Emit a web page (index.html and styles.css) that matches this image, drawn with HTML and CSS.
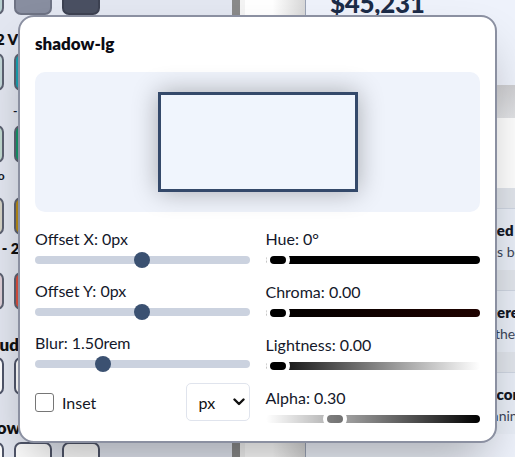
FILE: index.html
```html
<!DOCTYPE html>
<html lang="en">
<head>
<meta charset="utf-8">
<title>Shadow editor</title>
<link rel="stylesheet" href="styles.css">
</head>
<body>
<div class="page">
  <aside class="tools">
    <div class="tools-inner">
      <div class="btn-row first">
        <span class="swatch sw-tealish"></span>
        <span class="swatch sw-gray"></span>
        <span class="swatch sw-slate"></span>
      </div>
      <h3 class="tool-label">Tier 2 Vivid</h3>
      <div class="btn-row">
        <span class="swatch sw-pale-teal"></span>
        <span class="swatch sw-teal"></span>
        <span class="swatch sw-pale-teal"></span>
      </div>
      <p class="tool-note note-a">- 1</p>
      <div class="btn-row">
        <span class="swatch sw-pale-green"></span>
        <span class="swatch sw-green"></span>
        <span class="swatch sw-pale-green"></span>
      </div>
      <p class="tool-note note-b">Iso</p>
      <div class="btn-row">
        <span class="swatch sw-beige"></span>
        <span class="swatch sw-gold"></span>
        <span class="swatch sw-beige"></span>
      </div>
      <h3 class="tool-label small">Warm - 2</h3>
      <div class="btn-row">
        <span class="swatch sw-pink"></span>
        <span class="swatch sw-red"></span>
        <span class="swatch sw-pink"></span>
      </div>
      <h3 class="tool-label big studio">Studio</h3>
      <div class="btn-row">
        <span class="swatch sw-white"></span>
        <span class="swatch sw-white"></span>
        <span class="swatch sw-white"></span>
      </div>
      <h3 class="tool-label big glow">Glow</h3>
      <div class="btn-row">
        <span class="swatch sw-white"></span>
        <span class="swatch sw-white"></span>
        <span class="swatch sw-white"></span>
      </div>
    </div>
  </aside>
  <div class="divider"></div>
  <div class="gutter"></div>
  <main class="dash">
    <div class="stat"><span class="stat-value">$45,231</span></div>
    <div class="band"></div>
    <div class="blank"></div>
    <div class="band thin"></div>
    <div class="card">
      <div class="card-title t1">Payment settled</div>
      <div class="card-text s1">Your invoice has been paid</div>
    </div>
    <div class="band thin"></div>
    <div class="card">
      <div class="card-title t2">New user registered</div>
      <div class="card-text s2">Welcome to the platform</div>
    </div>
    <div class="band thin"></div>
    <div class="card">
      <div class="card-title t3">Server reconnected</div>
      <div class="card-text s3">Backup running again</div>
    </div>
  </main>
</div>

<section class="modal">
  <h2 class="modal-title">shadow-lg</h2>
  <div class="preview">
    <div class="sample"></div>
  </div>
  <div class="controls">
    <div class="col">
      <div class="field">
        <label class="field-label">Offset X: 0px</label>
        <input class="range" type="range" min="-50" max="50" value="0">
      </div>
      <div class="field">
        <label class="field-label">Offset Y: 0px</label>
        <input class="range" type="range" min="-50" max="50" value="0">
      </div>
      <div class="field">
        <label class="field-label">Blur: 1.50rem</label>
        <input class="range" type="range" min="0" max="5" step="0.05" value="1.5">
      </div>
      <div class="bottom-row">
        <label class="check">
          <input class="checkbox" type="checkbox">
          <span>Inset</span>
        </label>
        <div class="select-wrap">
          <select class="unit">
            <option>px</option>
            <option>rem</option>
          </select>
          <svg class="chev" width="12" height="8" viewBox="0 0 12 8"><path d="M1.5 1.5 L6 6 L10.5 1.5" fill="none" stroke="#111" stroke-width="2.4" stroke-linecap="round" stroke-linejoin="round"/></svg>
        </div>
      </div>
    </div>
    <div class="col">
      <div class="field">
        <label class="field-label">Hue: 0°</label>
        <input class="color-range hue" type="range" min="0" max="360" value="0">
      </div>
      <div class="field">
        <label class="field-label">Chroma: 0.00</label>
        <input class="color-range chroma" type="range" min="0" max="0.4" step="0.01" value="0">
      </div>
      <div class="field">
        <label class="field-label">Lightness: 0.00</label>
        <input class="color-range light" type="range" min="0" max="1" step="0.01" value="0">
      </div>
      <div class="field">
        <label class="field-label">Alpha: 0.30</label>
        <input class="color-range alpha" type="range" min="0" max="1" step="0.01" value="0.3">
      </div>
    </div>
  </div>
</section>
</body>
</html>
```
FILE: styles.css
```css
* { box-sizing: border-box; }

html, body {
  margin: 0;
  padding: 0;
}

body {
  width: 515px;
  height: 457px;
  overflow: hidden;
  position: relative;
  font-family: Lato, "Noto Sans", sans-serif;
  color: #141826;
  background: #e6eaf3;
}

/* ---------- background page ---------- */
.page {
  display: grid;
  grid-template-columns: 232px 13px 61px 1fr;
  height: 457px;
}

.tools {
  background: #e3e7f1;
  overflow: hidden;
}

.tools-inner {
  margin-left: -47px;
  margin-top: -23px;
  padding-left: 13px;
  display: flex;
  flex-direction: column;
}

.btn-row {
  display: flex;
  gap: 10px;
  height: 38px;
}

.swatch {
  width: 38px;
  height: 38px;
  border-radius: 7px;
  border: 2px solid #5d6272;
  flex: none;
}

.sw-tealish { background: #b7cfd0; }
.sw-gray { background: #888ea0; border-color: #6e7384; }
.sw-slate { background: #4a5062; border-color: #3d4252; }
.sw-pale-teal { background: #c3d7d8; }
.sw-teal { background: #17a2b2; }
.sw-pale-green { background: #c0d9cf; }
.sw-green { background: #14966a; }
.sw-beige { background: #d6d4c6; }
.sw-gold { background: #b98d17; }
.sw-pink { background: #ddcfd7; }
.sw-red { background: #df4f3f; }
.sw-white { background: #ffffff; border-color: #50566a; }

.tool-label {
  margin: 0;
  height: 38px;
  padding-top: 15px;
  font-size: 15px;
  font-weight: 800;
  color: #111;
  white-space: nowrap;
}

.tool-label.small {
  height: 37px;
  padding-top: 4px;
  padding-left: 0;
  margin-left: -9px;
}

.tool-label.big {
  height: 47px;
  font-size: 17px;
}

.tool-label.studio {
  padding-top: 24px;
  padding-left: 18px;
}

.tool-label.glow {
  padding-top: 22px;
  padding-left: 14px;
}

.tool-note {
  margin: 0;
  height: 34px;
  padding-top: 12px;
  font-size: 12px;
  font-weight: 700;
  white-space: nowrap;
}

.note-a { padding-left: 47px; }
.note-b { padding-left: 23px; padding-top: 5px; }

.divider {
  background: linear-gradient(to right, #8a8a8a 0, #8a8a8a 8px, #f4f4f4 8px);
}

.gutter {
  background: linear-gradient(to right, #ffffff 0, #ffffff 45%, #d8d8d8 98%, #9aa3b5 98%);
}

.dash {
  display: flex;
  flex-direction: column;
  background: #eef2fb;
  overflow: hidden;
}

.stat {
  height: 85px;
  padding-left: 24px;
  overflow: hidden;
  flex: none;
}

.stat-value {
  display: block;
  margin-top: -10px;
  font-size: 26px;
  line-height: 26px;
  font-weight: 900;
  letter-spacing: -0.3px;
  color: #1c2c48;
}

.band {
  height: 33px;
  flex: none;
  background: linear-gradient(#cfcfd2, #e2e3e6);
}

.band.thin {
  height: 20px;
  background: #e1e5ec;
}

.blank {
  height: 70px;
  flex: none;
  background: #ffffff;
}

.card {
  height: 62px;
  flex: none;
  padding: 10px 0 0 16px;
  background: #e9eef7;
  border-top: 1px solid #cfd6e2;
  white-space: nowrap;
}

.card-title {
  font-size: 15px;
  font-weight: 800;
  line-height: 22px;
}

.card-text {
  font-size: 14px;
  line-height: 22px;
  color: #3c465a;
}

.t1 { padding-left: 82px; }
.t2 { padding-left: 70px; }
.t3 { padding-left: 114px; }
.s1 { padding-left: 82px; }
.s2 { padding-left: 95px; }
.s3 { padding-left: 107px; }

/* ---------- modal ---------- */
.modal {
  position: absolute;
  left: 18px;
  top: 15px;
  width: 479px;
  height: 428px;
  border: 2px solid #8b90a1;
  border-radius: 16px;
  background: #ffffff;
  padding: 15px;
  box-shadow: 0 25px 50px -12px rgba(0, 0, 0, 0.3);
}

.modal-title {
  margin: 0 0 16px;
  font-size: 17px;
  line-height: 24px;
  font-weight: 800;
  color: #0c0c14;
}

.preview {
  height: 140px;
  border-radius: 10px;
  background: #eff3fb;
  display: flex;
  align-items: center;
  justify-content: center;
}

.sample {
  width: 200px;
  height: 100px;
  border: 3px solid #34496a;
  background: #f0f5fd;
  box-shadow: 0 0 24px rgba(0, 0, 0, 0.3);
}

.controls {
  margin-top: 15px;
  display: grid;
  grid-template-columns: 1fr 1fr;
  column-gap: 16px;
}

.col {
  display: flex;
  flex-direction: column;
  gap: 11px;
}

.col + .col { gap: 12px; }

.field {
  display: flex;
  flex-direction: column;
}

.field-label {
  font-size: 16px;
  line-height: 24px;
  color: #14182a;
}

/* left sliders */
.range {
  -webkit-appearance: none;
  appearance: none;
  width: 100%;
  height: 16px;
  margin: 1px 0 0;
  background: transparent;
}

.range::-webkit-slider-runnable-track {
  height: 8px;
  border-radius: 4px;
  background: #cbd2df;
}

.range::-webkit-slider-thumb {
  -webkit-appearance: none;
  appearance: none;
  width: 16px;
  height: 16px;
  margin-top: -4px;
  border-radius: 50%;
  background: #3b5171;
  border: none;
}

/* colour sliders */
.color-range {
  -webkit-appearance: none;
  appearance: none;
  width: 100%;
  height: 16px;
  margin: 1px 0 0;
  background: transparent;
}

.color-range::-webkit-slider-runnable-track {
  height: 8px;
  border-radius: 4px;
}

.color-range::-webkit-slider-thumb {
  -webkit-appearance: none;
  appearance: none;
  box-sizing: border-box;
  width: 24px;
  height: 16px;
  margin-top: -4px;
  border: 4px solid #ffffff;
  border-radius: 8px;
  background: #000000;
}

.hue::-webkit-slider-runnable-track { background: #000000; }
.chroma::-webkit-slider-runnable-track { background: linear-gradient(to right, #000000, #1f0200); }
.light::-webkit-slider-runnable-track { background: linear-gradient(to right, #000000, #ffffff); }
.alpha::-webkit-slider-runnable-track { background: linear-gradient(to right, rgba(0, 0, 0, 0), #000000); }
.alpha::-webkit-slider-thumb { background: rgba(0, 0, 0, 0.3); }

.bottom-row {
  display: flex;
  align-items: center;
  justify-content: space-between;
  height: 38px;
}

.check {
  display: flex;
  align-items: center;
  gap: 8px;
  font-size: 16px;
}

.checkbox {
  -webkit-appearance: none;
  appearance: none;
  width: 19px;
  height: 19px;
  margin: 0;
  border: 1px solid #767676;
  border-radius: 3px;
  background: #fff;
}

.select-wrap {
  position: relative;
  width: 64px;
  height: 38px;
}

.unit {
  -webkit-appearance: none;
  appearance: none;
  width: 100%;
  height: 100%;
  border: 1px solid #e0e4ed;
  border-radius: 5px;
  background: #fff;
  padding: 0 0 0 12px;
  font-family: inherit;
  font-size: 16px;
  color: #111;
}

.chev {
  position: absolute;
  right: 5px;
  top: 15px;
  pointer-events: none;
}
```
